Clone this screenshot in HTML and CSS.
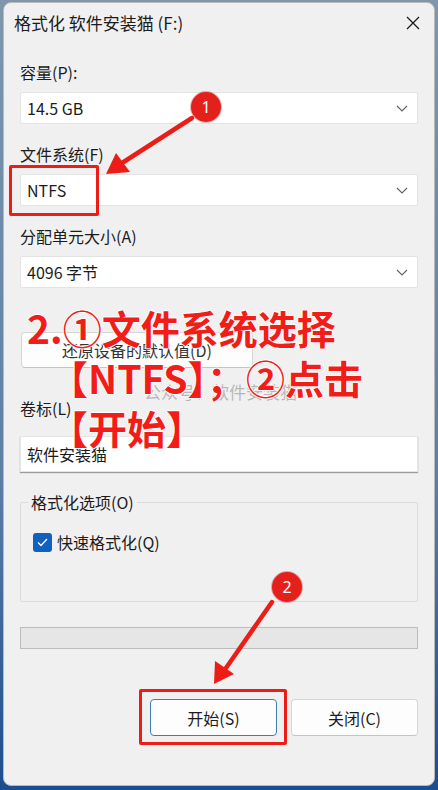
FILE: index.html
```html
<!DOCTYPE html>
<html lang="zh-CN">
<head>
    <meta charset="UTF-8">
    <title>格式化 软件安装猫 (F:)</title>
    <link rel="stylesheet" href="styles.css">
</head>
<body>
    <div class="dialog">
        <div class="titlebar">
            <span class="title">格式化 软件安装猫 (F:)</span>
            <svg class="close" width="14" height="14" viewBox="0 0 14 14">
                <path d="M1 1 L13 13 M13 1 L1 13" stroke="#1b1b1b" stroke-width="1.3" fill="none"/>
            </svg>
        </div>

        <div class="content">
            <div class="field-label">容量(P):</div>
            <div class="select">
                <span>14.5 GB</span>
                <svg class="chevron" width="12" height="7" viewBox="0 0 12 7"><path d="M1 1 L6 6 L11 1" stroke="#606060" stroke-width="1.1" fill="none"/></svg>
            </div>

            <div class="field-label">文件系统(F)</div>
            <div class="select">
                <span>NTFS</span>
                <svg class="chevron" width="12" height="7" viewBox="0 0 12 7"><path d="M1 1 L6 6 L11 1" stroke="#606060" stroke-width="1.1" fill="none"/></svg>
            </div>

            <div class="field-label">分配单元大小(A)</div>
            <div class="select">
                <span>4096 字节</span>
                <svg class="chevron" width="12" height="7" viewBox="0 0 12 7"><path d="M1 1 L6 6 L11 1" stroke="#606060" stroke-width="1.1" fill="none"/></svg>
            </div>

            <button class="btn btn-restore">还原设备的默认值(D)</button>

            <div class="field-label label-volume">卷标(L)</div>
            <div class="text-input">软件安装猫</div>

            <fieldset class="options">
                <legend>格式化选项(O)</legend>
                <div class="check-row">
                    <span class="checkbox">
                        <svg width="11" height="9" viewBox="0 0 11 9"><path d="M1 4.5 L4 7.5 L10 1" stroke="#fff" stroke-width="1.3" fill="none"/></svg>
                    </span>
                    <span>快速格式化(Q)</span>
                </div>
            </fieldset>

            <div class="progress"></div>

            <div class="actions">
                <button class="btn btn-default">开始(S)</button>
                <button class="btn">关闭(C)</button>
            </div>
        </div>

        <!-- annotations -->
        <div class="watermark">公众号：软件安装猫</div>
        <div class="mark-box mark-ntfs"></div>
        <div class="mark-box mark-start"></div>
        <svg class="arrows" width="438" height="790" viewBox="0 0 438 790">
            <line x1="192" y1="118" x2="122" y2="163" stroke="#ec1c17" stroke-width="4.5" stroke-linecap="round"/>
            <polygon points="106,174 116,153 130,172" fill="#ec1c17"/>
            <line x1="272" y1="602" x2="226" y2="668" stroke="#ec1c17" stroke-width="4.5" stroke-linecap="round"/>
            <polygon points="214,684 215,661 234,674" fill="#ec1c17"/>
        </svg>
        <div class="badge badge-1">1</div>
        <div class="badge badge-2">2</div>
        <div class="note">
            <div class="note-line">2.①文件系统选择</div>
            <div class="note-line note-indent">【NTFS】；②点击</div>
            <div class="note-line note-indent">【开始】</div>
        </div>
    </div>
</body>
</html>
```

FILE: styles.css
```css
* {
    margin: 0;
    padding: 0;
    box-sizing: border-box;
}

body {
    width: 438px;
    height: 790px;
    overflow: hidden;
    background: linear-gradient(180deg, #7f96ad 0%, #5d7fa6 60%, #1c4d8e 100%);
    font-family: "Segoe UI", "Noto Sans CJK SC", "Noto Sans", sans-serif;
    color: #1b1b1b;
    padding: 2px 3px 4px 3px;
}

.dialog {
    position: relative;
    height: 784px;
    background: #f0f0f0;
    border: 1px solid #b9b9b9;
    border-radius: 8px;
}

.titlebar {
    height: 39px;
    display: flex;
    align-items: center;
    justify-content: space-between;
    padding: 0 14px 0 10px;
}

.title {
    font-size: 17px;
    line-height: 20px;
}

.content {
    padding: 20px 16px 0;
}

.field-label {
    font-size: 16px;
    line-height: 20px;
    margin-bottom: 10px;
}

.select {
    height: 32px;
    background: #fff;
    border: 1px solid #e3e3e3;
    border-radius: 2px;
    display: flex;
    align-items: center;
    justify-content: space-between;
    padding: 0 9px 0 6px;
    font-size: 16px;
    margin-bottom: 20px;
}

.btn {
    font-family: inherit;
    font-size: 16px;
    color: #1b1b1b;
    background: #fdfdfd;
    border: 1px solid #d6d6d6;
    border-bottom-color: #c4c4c4;
    border-radius: 4px;
    cursor: pointer;
}

.btn-restore {
    display: block;
    width: 232px;
    height: 36px;
    margin: 44px 0 0 1px;
    color: #333;
}

.label-volume {
    margin-top: 30px;
    margin-bottom: 18px;
}

.text-input {
    height: 36px;
    background: #fff;
    border: 1px solid #e5e5e5;
    box-shadow: 0 1px 1px rgba(0,0,0,0.35);
    padding: 0 6px;
    display: flex;
    align-items: center;
    font-size: 16px;
}

.options {
    margin-top: 20px;
    border: 1px solid #dcdcdc;
    border-radius: 2px;
    padding: 0 5px 49px;
}

.options legend {
    font-size: 16px;
    line-height: 20px;
    padding: 0 3px;
    margin-left: 2px;
}

.check-row {
    display: flex;
    align-items: center;
    gap: 5px;
    margin: 20px 0 0 7px;
    font-size: 16px;
    line-height: 20px;
}

.checkbox {
    width: 19px;
    height: 19px;
    border-radius: 3px;
    background: #1060c0;
    display: flex;
    align-items: center;
    justify-content: center;
}

.progress {
    height: 22px;
    margin-top: 25px;
    background: #e6e6e6;
    border: 1px solid #bcbcbc;
}

.actions {
    display: flex;
    justify-content: flex-end;
    gap: 14px;
    margin-top: 50px;
}

.actions .btn {
    width: 127px;
    height: 37px;
}

.btn-default {
    border: 1px solid #3f7fae;
}

/* annotations over the dialog */
.watermark {
    position: absolute;
    left: 140px;
    top: 376px;
    font-size: 17px;
    color: rgba(110, 110, 110, 0.45);
}

.mark-box {
    position: absolute;
    border: 3.5px solid #ec1c17;
    border-radius: 2px;
}

.mark-ntfs {
    left: 5px;
    top: 162px;
    width: 90px;
    height: 51px;
}

.mark-start {
    left: 135px;
    top: 686px;
    width: 148px;
    height: 56px;
}

.arrows {
    position: absolute;
    left: -4px;
    top: -3px;
}

.badge {
    position: absolute;
    width: 30px;
    height: 30px;
    border-radius: 50%;
    background: #e3201b;
    color: #fff;
    font-family: "Noto Sans", sans-serif;
    font-size: 16px;
    line-height: 30px;
    text-align: center;
    box-shadow: 0 0 0 1px rgba(180,0,0,0.3);
}

.badge-1 {
    left: 187px;
    top: 89px;
}

.badge-2 {
    left: 268px;
    top: 569px;
}

.note {
    position: absolute;
    left: 23px;
    top: 299px;
    color: #f21d18;
    font-family: "Noto Sans CJK SC", "Noto Sans", sans-serif;
    font-weight: 700;
    font-size: 39px;
    line-height: 50px;
    text-shadow: 1px 0 0 #fff, -1px 0 0 #fff, 0 1px 0 #fff, 0 -1px 0 #fff;
    white-space: nowrap;
}

.note-indent {
    padding-left: 22px;
}
```
